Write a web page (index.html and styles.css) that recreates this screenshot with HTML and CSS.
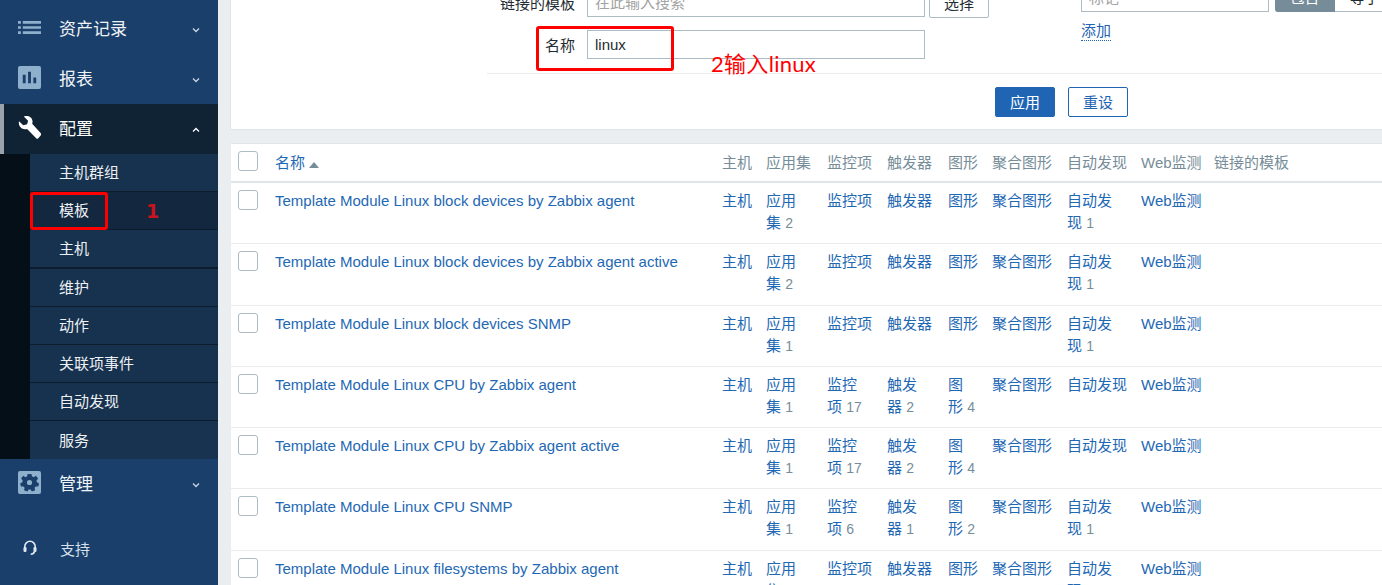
FILE: index.html
```html
<!DOCTYPE html>
<html>
<head>
    <title>模板</title>
    <link rel="stylesheet" href="styles.css">
</head>
<body>
    <div class="sidebar">
        <div class="menu-item">
            <svg class="menu-icon" viewBox="0 0 24 24"><path fill="#8fb0cd" d="M0 5.300h3V8H0zM5 5.300h19V8H5zM0 10.700h3v2.700H0zM5 10.700h19v2.700H5zM0 16h3v2.700H0zM5 16h19v2.700H5z"/></svg>
            <span class="menu-label">资产记录</span>
            <svg class="chevron" viewBox="0 0 10 10"><path d="M2 3.500l3 3 3-3"/></svg>
        </div>
        <div class="menu-item">
            <svg class="menu-icon" viewBox="0 0 24 24"><rect width="24" height="24" rx="2" fill="#8fb0cd"/><path fill="#1a3f6b" d="M5 9h3v9H5zM10.500 6h3v12h-3zM16 12h3v6h-3z"/></svg>
            <span class="menu-label">报表</span>
            <svg class="chevron" viewBox="0 0 10 10"><path d="M2 3.500l3 3 3-3"/></svg>
        </div>
        <div class="menu-item active">
            <svg class="menu-icon" viewBox="0 0 24 24"><path fill="#fff" d="M1 5.500l4.500 4.200 4-1L10.500 5 6 0.500C9-.8 13 .2 14.500 3c.8 1.700.9 3.300.3 5L23.800 18c.5.600.5 1.400 0 2l-2.600 3.200c-.6.700-1.600.7-2.200 0L9.500 13.500c-1.800.6-3.700.4-5.400-.5C1.500 11.500.4 8.500 1 5.500z"/></svg>
            <span class="menu-label">配置</span>
            <svg class="chevron up" viewBox="0 0 10 10"><path d="M2 6.500l3-3 3 3"/></svg>
        </div>
        <div class="submenu">
            <div class="submenu-list">
                <div class="submenu-item">主机群组</div>
                <div class="submenu-item selected">模板</div>
                <div class="submenu-item thick">主机</div>
                <div class="submenu-item">维护</div>
                <div class="submenu-item">动作</div>
                <div class="submenu-item">关联项事件</div>
                <div class="submenu-item">自动发现</div>
                <div class="submenu-item">服务</div>
            </div>
        </div>
        <div class="menu-item">
            <svg class="menu-icon" viewBox="0 0 24 24"><rect width="24" height="24" rx="2" fill="#8fb0cd"/><path fill="#1a3f6b" fill-rule="evenodd" d="M10 3h4l.6 2.600 1.800.8 2.300-1.400 2.300 2.900-1.700 2 .4 1.900 2.300 1.200-.9 3.200-2.600-.1-1.200 1.500.6 2.600-3.400 1.300-1.400-2.200h-2l-1.400 2.200-3.400-1.300.6-2.600-1.200-1.500-2.600.1-.9-3.200 2.300-1.200.4-1.900-1.700-2 2.300-2.900 2.300 1.400 1.800-.8zM12 9.300a2.700 2.700 0 1 0 0 5.400 2.700 2.700 0 0 0 0-5.400z"/></svg>
            <span class="menu-label">管理</span>
            <svg class="chevron" viewBox="0 0 10 10"><path d="M2 3.500l3 3 3-3"/></svg>
        </div>
        <div class="support">
            <svg class="support-icon" viewBox="0 0 16 16"><path fill="none" stroke="#dfe8f0" stroke-width="1.600" d="M2.800 9V6.500a5.200 5.200 0 0 1 10.400 0V9M12.500 11.500c-.5 2-1.800 2.700-3.800 2.700"/><rect x="1.500" y="7" width="3" height="5" rx="1.200" fill="#dfe8f0"/><rect x="11.500" y="7" width="3" height="5" rx="1.200" fill="#dfe8f0"/></svg>
            <span>支持</span>
        </div>
    </div>

    <div class="main">
        <div class="filter-panel">
            <div class="filter-cols">
                <div class="filter-left">
                    <label class="filter-label">链接的模板</label>
                    <div class="field-row">
                        <input class="text-input" type="text" placeholder="在此输入搜索">
                        <button class="select-btn">选择</button>
                    </div>
                    <label class="filter-label">名称</label>
                    <div class="field-row">
                        <input class="text-input" type="text" value="linux">
                    </div>
                </div>
                <div class="filter-right">
                    <div class="tag-row">
                        <input class="tag-input" type="text" placeholder="标记">
                        <div class="segmented">
                            <span class="seg on">包含</span>
                            <span class="seg">等于</span>
                        </div>
                    </div>
                    <a class="add-link">添加</a>
                </div>
            </div>
            <div class="filter-actions">
                <button class="btn-primary">应用</button>
                <button class="btn-alt">重设</button>
            </div>
        </div>

        <table class="list-table">
            <colgroup>
                <col class="c-check"><col class="c-name"><col class="c-hosts"><col class="c-apps">
                <col class="c-items"><col class="c-trig"><col class="c-graph"><col class="c-screen">
                <col class="c-disc"><col class="c-web"><col class="c-linked">
            </colgroup>
            <thead>
                <tr>
                    <th><span class="checkbox"></span></th>
                    <th><a class="link">名称</a><span class="sort-up"></span></th>
                    <th>主机</th><th>应用集</th><th>监控项</th><th>触发器</th><th>图形</th><th>聚合图形</th><th>自动发现</th><th>Web监测</th><th>链接的模板</th>
                </tr>
            </thead>
            <tbody>
                <tr>
                    <td><span class="checkbox"></span></td>
                    <td><a class="link">Template Module Linux block devices by Zabbix agent</a></td>
                    <td><a class="link">主机</a></td>
                    <td><a class="link">应用集</a>&nbsp;<sup>2</sup></td>
                    <td><a class="link">监控项</a></td>
                    <td><a class="link">触发器</a></td>
                    <td><a class="link">图形</a></td>
                    <td><a class="link">聚合图形</a></td>
                    <td><a class="link">自动发现</a>&nbsp;<sup>1</sup></td>
                    <td class="web-cell"><a class="link">Web监测</a></td>
                    <td></td>
                </tr>
                <tr>
                    <td><span class="checkbox"></span></td>
                    <td><a class="link">Template Module Linux block devices by Zabbix agent active</a></td>
                    <td><a class="link">主机</a></td>
                    <td><a class="link">应用集</a>&nbsp;<sup>2</sup></td>
                    <td><a class="link">监控项</a></td>
                    <td><a class="link">触发器</a></td>
                    <td><a class="link">图形</a></td>
                    <td><a class="link">聚合图形</a></td>
                    <td><a class="link">自动发现</a>&nbsp;<sup>1</sup></td>
                    <td class="web-cell"><a class="link">Web监测</a></td>
                    <td></td>
                </tr>
                <tr>
                    <td><span class="checkbox"></span></td>
                    <td><a class="link">Template Module Linux block devices SNMP</a></td>
                    <td><a class="link">主机</a></td>
                    <td><a class="link">应用集</a>&nbsp;<sup>1</sup></td>
                    <td><a class="link">监控项</a></td>
                    <td><a class="link">触发器</a></td>
                    <td><a class="link">图形</a></td>
                    <td><a class="link">聚合图形</a></td>
                    <td><a class="link">自动发现</a>&nbsp;<sup>1</sup></td>
                    <td class="web-cell"><a class="link">Web监测</a></td>
                    <td></td>
                </tr>
                <tr>
                    <td><span class="checkbox"></span></td>
                    <td><a class="link">Template Module Linux CPU by Zabbix agent</a></td>
                    <td><a class="link">主机</a></td>
                    <td><a class="link">应用集</a>&nbsp;<sup>1</sup></td>
                    <td><a class="link">监控项</a>&nbsp;<sup>17</sup></td>
                    <td><a class="link">触发器</a>&nbsp;<sup>2</sup></td>
                    <td><a class="link">图形</a>&nbsp;<sup>4</sup></td>
                    <td><a class="link">聚合图形</a></td>
                    <td><a class="link">自动发现</a></td>
                    <td class="web-cell"><a class="link">Web监测</a></td>
                    <td></td>
                </tr>
                <tr>
                    <td><span class="checkbox"></span></td>
                    <td><a class="link">Template Module Linux CPU by Zabbix agent active</a></td>
                    <td><a class="link">主机</a></td>
                    <td><a class="link">应用集</a>&nbsp;<sup>1</sup></td>
                    <td><a class="link">监控项</a>&nbsp;<sup>17</sup></td>
                    <td><a class="link">触发器</a>&nbsp;<sup>2</sup></td>
                    <td><a class="link">图形</a>&nbsp;<sup>4</sup></td>
                    <td><a class="link">聚合图形</a></td>
                    <td><a class="link">自动发现</a></td>
                    <td class="web-cell"><a class="link">Web监测</a></td>
                    <td></td>
                </tr>
                <tr>
                    <td><span class="checkbox"></span></td>
                    <td><a class="link">Template Module Linux CPU SNMP</a></td>
                    <td><a class="link">主机</a></td>
                    <td><a class="link">应用集</a>&nbsp;<sup>1</sup></td>
                    <td><a class="link">监控项</a>&nbsp;<sup>6</sup></td>
                    <td><a class="link">触发器</a>&nbsp;<sup>1</sup></td>
                    <td><a class="link">图形</a>&nbsp;<sup>2</sup></td>
                    <td><a class="link">聚合图形</a></td>
                    <td><a class="link">自动发现</a>&nbsp;<sup>1</sup></td>
                    <td class="web-cell"><a class="link">Web监测</a></td>
                    <td></td>
                </tr>
                <tr>
                    <td><span class="checkbox"></span></td>
                    <td><a class="link">Template Module Linux filesystems by Zabbix agent</a></td>
                    <td><a class="link">主机</a></td>
                    <td><a class="link">应用集</a>&nbsp;<sup>1</sup></td>
                    <td><a class="link">监控项</a></td>
                    <td><a class="link">触发器</a></td>
                    <td><a class="link">图形</a></td>
                    <td><a class="link">聚合图形</a></td>
                    <td><a class="link">自动发现</a>&nbsp;<sup>1</sup></td>
                    <td class="web-cell"><a class="link">Web监测</a></td>
                    <td></td>
                </tr>
            </tbody>
        </table>
    </div>

    <!-- annotations drawn over the screenshot -->
    <div class="mark mark-menu"></div>
    <div class="mark-num">1</div>
    <div class="mark mark-name"></div>
    <div class="mark-text">2输入linux</div>
</body>
</html>
```

FILE: styles.css
```css
html, body {
    height: 100%;
}

body {
    margin: 0;
    padding: 0;
    display: flex;
    height: 585px;
    overflow: hidden;
    font-family: "Liberation Sans", "Noto Sans CJK SC", sans-serif;
    font-size: 15px;
    color: #1f2c33;
    background-color: #ebeef0;
    position: relative;
}

/* Sidebar */
.sidebar {
    flex: 0 0 218px;
    width: 218px;
    background-color: #1a3f6b;
    padding-top: 4px;
    box-sizing: border-box;
}

.menu-item {
    display: flex;
    align-items: center;
    height: 50px;
    padding-left: 18px;
    box-sizing: border-box;
    color: #f0f3f6;
    font-size: 17px;
}

.menu-item.active {
    background-color: #0f2335;
    border-left: 4px solid #9aa3aa;
    padding-left: 14px;
    color: #fff;
}

.menu-icon {
    width: 23px;
    height: 23px;
    flex: none;
    margin-bottom: 4px;
}

.menu-label {
    margin-left: 18px;
    margin-bottom: 3px;
    flex: 1;
}

.chevron {
    width: 10px;
    height: 10px;
    margin-right: 17px;
    margin-top: 2px;
    fill: none;
    stroke: #c8d6e2;
    stroke-width: 1.3;
}

.chevron.up {
    stroke: #fff;
}

.submenu {
    background-color: #040f18;
    padding-left: 30px;
    height: 305px;
    overflow: hidden;
}

.submenu-list {
    background-color: #15314e;
    height: 100%;
}

.submenu-item {
    height: 37px;
    line-height: 38px;
    padding-left: 29px;
    color: #eef1f4;
    border-bottom: 1px solid #0c1c2c;
    background-color: #16324f;
}

.submenu-item.selected {
    background-color: #13273f;
}

.submenu-item.thick {
    border-bottom-width: 2px;
}

.submenu-item:last-child {
    border-bottom: none;
    height: 38px;
    line-height: 40px;
    background-color: #17334f;
}

.support {
    display: flex;
    align-items: center;
    margin-top: 19px;
    height: 40px;
    padding-left: 22px;
    color: #d5e0ea;
}

.support-icon {
    width: 16px;
    height: 16px;
    margin-right: 22px;
}

/* Right side */
.main {
    flex: 1;
    min-width: 0;
    padding-left: 12px;
    overflow: hidden;
}

.filter-panel {
    width: 1300px;
    height: 147px;
    margin-top: -17px;
    box-sizing: border-box;
    background-color: #fff;
    border: 1px solid #dfe4e7;
    border-top: none;
    margin-bottom: 13px;
}

.filter-cols {
    display: flex;
    height: 90px;
    padding-left: 256px;
}

.filter-left {
    display: grid;
    grid-template-columns: 88px 1fr;
    grid-auto-rows: 29px;
    column-gap: 12px;
    row-gap: 13px;
    padding-top: 5px;
    align-items: center;
}

.filter-label {
    text-align: right;
    white-space: nowrap;
}

.field-row {
    display: flex;
    gap: 4px;
}

.text-input {
    width: 338px;
    height: 29px;
    box-sizing: border-box;
    border: 1px solid #acbbc4;
    padding: 0 7px;
    font: inherit;
    color: #1f2c33;
    outline: none;
}

.text-input::placeholder,
.tag-input::placeholder {
    color: #a3a3a3;
}

.select-btn {
    width: 60px;
    height: 30px;
    box-sizing: border-box;
    background-color: #fff;
    border: 1px solid #acbbc4;
    border-radius: 2px;
    font: inherit;
    color: #1f2c33;
}

.filter-right {
    margin-left: 92px;
}

.tag-row {
    display: flex;
    gap: 6px;
}

.tag-input {
    width: 188px;
    height: 29px;
    box-sizing: border-box;
    border: 1px solid #acbbc4;
    padding: 0 7px;
    font: inherit;
    outline: none;
}

.segmented {
    display: flex;
}

.seg {
    width: 60px;
    height: 29px;
    line-height: 28px;
    text-align: center;
    box-sizing: border-box;
    border: 1px solid #acbbc4;
    border-left: none;
    flex: none;
}

.seg.on {
    background-color: #768d99;
    border-color: #768d99;
    color: #fff;
    border-radius: 0 0 0 3px;
}

.add-link {
    display: inline-block;
    margin-top: 9px;
    line-height: 19px;
    color: #1f65b4;
    border-bottom: 1px dotted #1f65b4;
}

.filter-actions {
    margin-left: 256px;
    border-top: 1px solid #e9ecee;
    display: flex;
    gap: 13px;
    padding: 13px 0 0 508px;
}

.btn-primary,
.btn-alt {
    width: 60px;
    height: 30px;
    box-sizing: border-box;
    border-radius: 2px;
    border: 1px solid #1f65b4;
    padding: 0 0 2px;
    font: inherit;
}

.btn-primary {
    background-color: #1f65b4;
    color: #fff;
}

.btn-alt {
    background-color: #fff;
    color: #1f65b4;
}

/* Template table */
.list-table {
    table-layout: fixed;
    width: 1300px;
    border-collapse: separate;
    border-spacing: 0;
    background-color: #fff;
    border-top: 1px solid #dfe4e7;
    margin-left: 1px;
}

.c-check { width: 37px; }
.c-name { width: 447px; }
.c-hosts { width: 44px; }
.c-apps { width: 61px; }
.c-items { width: 60px; }
.c-trig { width: 61px; }
.c-graph { width: 44px; }
.c-screen { width: 75px; }
.c-disc { width: 74px; }
.c-web { width: 73px; }
.c-linked { width: 324px; }

.list-table th {
    padding: 0 7px 2px;
    text-align: left;
    font-weight: normal;
    color: #768d99;
    border-bottom: 2px solid #dfe4e7;
    box-sizing: border-box;
    white-space: nowrap;
    height: 39px;
}

.list-table td {
    padding: 7px 7px 9.25px;
    line-height: 22px;
    vertical-align: top;
    border-bottom: 1px solid #e9ecee;
    color: #768d99;
}

.list-table td.web-cell {
    white-space: nowrap;
}

.list-table td sup {
    vertical-align: baseline;
    font-size: 14px;
    color: #768d99;
}

.link {
    color: #1e68b4;
}

.checkbox {
    display: block;
    width: 20px;
    height: 20px;
    box-sizing: border-box;
    border: 1px solid #acbbc4;
    border-radius: 3px;
    background-color: #fff;
}

.list-table th .checkbox {
    margin-top: -2px;
}

.sort-up {
    display: inline-block;
    margin-left: 4px;
    width: 0;
    height: 0;
    border-left: 5px solid transparent;
    border-right: 5px solid transparent;
    border-bottom: 6px solid #768d99;
}

/* Red annotations */
.mark {
    position: absolute;
    box-sizing: border-box;
    border: 3px solid #f00;
    border-radius: 3px;
}

.mark-menu {
    left: 30px;
    top: 192px;
    width: 78px;
    height: 38px;
}

.mark-name {
    left: 536px;
    top: 26px;
    width: 138px;
    height: 45px;
}

.mark-num {
    position: absolute;
    left: 146px;
    top: 200px;
    font-family: "DejaVu Sans", sans-serif;
    font-weight: bold;
    font-size: 19px;
    color: #c8141c;
}

.mark-text {
    position: absolute;
    left: 711px;
    top: 49px;
    font-size: 22px;
    line-height: 30px;
    letter-spacing: .3px;
    color: #f00;
    font-family: "Lato", "Noto Sans CJK SC", sans-serif;
}
```
